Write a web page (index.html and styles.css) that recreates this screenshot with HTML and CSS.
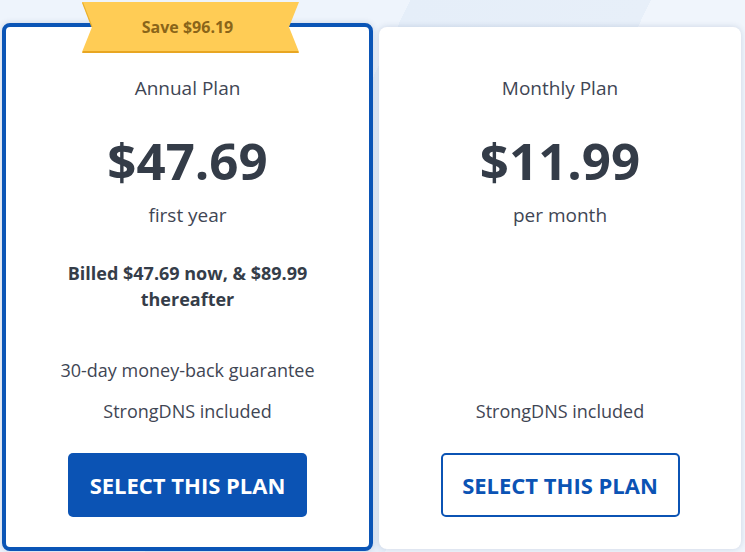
FILE: index.html
```html
<!DOCTYPE html>
<html lang="en">
<head>
<meta charset="utf-8">
<title>Plans</title>
<link rel="stylesheet" href="styles.css">
</head>
<body>
<div class="page">
  <div class="card card-featured">
    <div class="ribbon">
      <svg class="ribbon-bg" width="217" height="51" viewBox="0 0 217 51" aria-hidden="true">
        <polygon points="0,0 217,0 207,25 217,50 0,50 10,25" fill="#ffcc55"/>
        <polygon points="1,49 216,49 217,51 0,51" fill="#e8a622"/>
        <line x1="0.5" y1="0.5" x2="10" y2="25" stroke="#ebb02c" stroke-width="1.2"/>
      </svg>
      <span class="ribbon-text">Save $96.19</span>
    </div>
    <div class="plan-name">Annual Plan</div>
    <div class="price">$47.69</div>
    <div class="period">first year</div>
    <div class="billed">Billed $47.69 now, &amp; $89.99 thereafter</div>
    <ul class="features">
      <li>30-day money-back guarantee</li>
      <li>StrongDNS included</li>
    </ul>
    <a class="btn btn-solid" href="#">Select this plan</a>
  </div>
  <div class="card card-plain">
    <div class="plan-name">Monthly Plan</div>
    <div class="price">$11.99</div>
    <div class="period">per month</div>
    <ul class="features">
      <li>StrongDNS included</li>
    </ul>
    <a class="btn btn-outline" href="#">Select this plan</a>
  </div>
</div>
</body>
</html>
```

FILE: styles.css
```css
html, body {
  margin: 0;
  padding: 0;
}
body {
  width: 745px;
  height: 552px;
  overflow: hidden;
  font-family: "Open Sans", "Noto Sans", sans-serif;
  color: #404755;
  background: linear-gradient(115.7deg, #eef4fc 0%, #eef4fc 40.6%, #e5eef9 40.6%, #e7eff9 64.4%, #f0f5fc 64.4%, #f0f5fc 100%);
}
.page {
  display: flex;
  align-items: flex-start;
  gap: 6px;
  padding: 23px 0 0 2px;
}
.card {
  position: relative;
  box-sizing: border-box;
  display: flex;
  flex-direction: column;
  align-items: center;
  background: #fff;
  border-radius: 8px;
  text-align: center;
  box-shadow: 0 0 6px rgba(20, 50, 100, 0.16);
}
.card-featured {
  width: 371px;
  height: 528px;
  border: 4px solid #0b55b6;
  padding: 48px 40px 30px;
}
.card-plain {
  width: 362px;
  height: 522px;
  margin-top: 4px;
  padding: 48px 40px 32px;
}
.ribbon {
  position: absolute;
  left: 76px;
  top: -25px;
  width: 217px;
  height: 51px;
  display: flex;
  align-items: center;
  justify-content: center;
}
.ribbon-bg {
  position: absolute;
  left: 0;
  top: 0;
}
.ribbon-text {
  position: relative;
  font-size: 16px;
  font-weight: 700;
  color: #8a6519;
  padding-right: 6px;
  margin-top: -2px;
}
.plan-name {
  font-size: 19px;
  line-height: 26px;
  color: #3f4654;
}
.price {
  margin-top: 29px;
  font-size: 51px;
  line-height: 60px;
  font-weight: 700;
  color: #343c48;
}
.period {
  margin-top: 12px;
  font-size: 19px;
  line-height: 26px;
  color: #3f4654;
}
.billed {
  margin-top: 32px;
  max-width: 280px;
  font-size: 18px;
  line-height: 26px;
  font-weight: 700;
  color: #353d49;
}
.features {
  list-style: none;
  margin: auto 0 0;
  padding: 0;
  display: flex;
  flex-direction: column;
  gap: 17px;
}
.features li {
  font-size: 18px;
  line-height: 24px;
  color: #3f4654;
}
.btn {
  box-sizing: border-box;
  margin-top: 30px;
  width: 239px;
  height: 64px;
  display: flex;
  align-items: center;
  justify-content: center;
  border-radius: 5px;
  font-size: 22px;
  font-weight: 700;
  text-transform: uppercase;
  text-decoration: none;
}
.btn-solid {
  background: #0b53b4;
  color: #fff;
}
.btn-outline {
  background: #fff;
  color: #0b53b4;
  border: 2px solid #0b53b4;
}
```
